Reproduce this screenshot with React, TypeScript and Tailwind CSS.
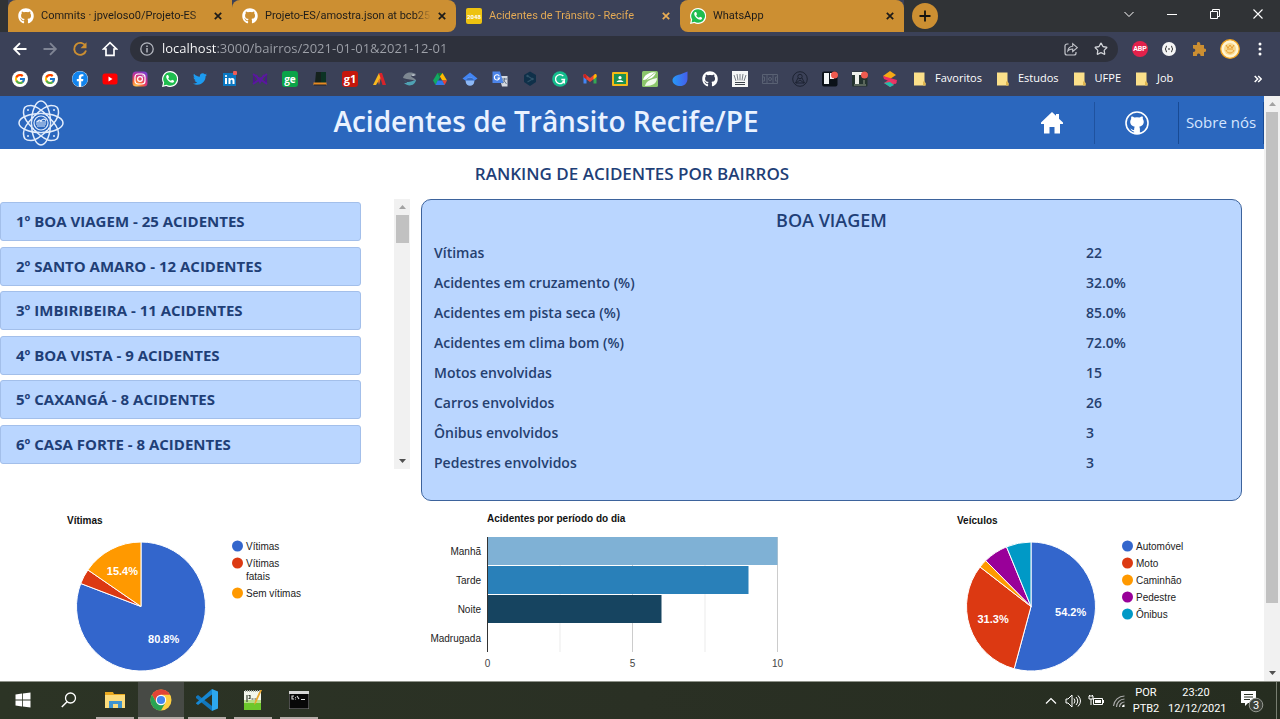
import type { ReactNode } from "react";
import { FcGoogle } from "react-icons/fc";
import { FaFacebook, FaGithub, FaTwitter } from "react-icons/fa";
import { Star } from "lucide-react";

type SvgProps = { className?: string; box?: string; children: ReactNode };

function Svg({ className = "size-4", box = "0 0 16 16", children }: SvgProps) {
  return (
    <svg viewBox={box} className={`shrink-0 ${className}`} fill="none" aria-hidden="true">
      {children}
    </svg>
  );
}

function WhatsAppIcon() {
  return (
    <Svg>
      <path d="M8 0a8 8 0 0 0-7 11.8L0 16l4.3-1A8 8 0 1 0 8 0Z" fill="#fff" />
      <path d="M8 1.2a6.8 6.8 0 0 0-5.8 10.3l-.6 2.9 2.9-.7A6.8 6.8 0 1 0 8 1.2Z" fill="#1fbd4f" />
      <path
        d="M5.4 4c-.4 0-1.2.6-1.2 1.8 0 2.5 3.5 6 6.1 6 1.200 0 1.900-.9 1.900-1.700 0-.4-1.800-1.300-2.100-1.300-.4 0-.7 1-1.100 1-.7 0-2.700-1.800-2.700-2.400 0-.3.700-.7.700-1.100C7 5.900 6.300 4 5.900 4Z"
        fill="#fff"
      />
    </Svg>
  );
}

const googleBadge = (
  <span className="flex size-4 items-center justify-center rounded-full bg-white">
    <FcGoogle className="size-3" />
  </span>
);

const bookmarkIcons: { name: string; icon: ReactNode }[] = [
  { name: "Google", icon: googleBadge },
  { name: "Google conta", icon: googleBadge },
  {
    name: "Facebook",
    icon: (
      <span className="flex size-4 rounded-full bg-white">
        <FaFacebook className="size-4 text-[#1184ee]" />
      </span>
    ),
  },
  {
    name: "YouTube",
    icon: (
      <Svg>
        <rect y="2.500" x=".5" width="15" height="11" rx="2.500" fill="#f00" />
        <path d="m6.500 5.600 4 2.400-4 2.400Z" fill="#fff" />
      </Svg>
    ),
  },
  {
    name: "Instagram",
    icon: (
      <Svg>
        <defs>
          <radialGradient id="ig" cx=".25" cy="1" r="1.100">
            <stop offset="0" stopColor="#ffd35a" />
            <stop offset=".35" stopColor="#fb6b35" />
            <stop offset=".65" stopColor="#d62e81" />
            <stop offset="1" stopColor="#7a3fd0" />
          </radialGradient>
        </defs>
        <rect x=".5" y=".5" width="15" height="15" rx="3.500" fill="url(#ig)" />
        <rect x="3" y="3" width="10" height="10" rx="3" stroke="#fff" strokeWidth="1.200" />
        <circle cx="8" cy="8" r="2.400" stroke="#fff" strokeWidth="1.200" />
        <circle cx="11" cy="5" r=".7" fill="#fff" />
      </Svg>
    ),
  },
  { name: "WhatsApp", icon: <WhatsAppIcon /> },
  { name: "Twitter", icon: <FaTwitter className="size-[14px] text-[#1d9bf0]" /> },
  {
    name: "LinkedIn",
    icon: (
      <Svg>
        <rect y="2" x="1" width="13" height="13" fill="#0a78c2" />
        <path d="M3 7h2v6H3ZM6.500 7h1.900v.9c1-1.500 4.100-1.300 4.100 1.500V13h-2V9.900c0-1.600-2-1.600-2 0V13h-2Z" fill="#fff" />
        <circle cx="4" cy="5" r="1.100" fill="#fff" />
        <rect x="11" width="4" height="4" rx="1" fill="#ee5d56" />
      </Svg>
    ),
  },
  {
    name: "M",
    icon: (
      <Svg>
        <path d="M1 3v10l2-1V8Zm14 0v10l-2-1V8Z" fill="#4c168c" />
        <path d="m1 3 7 5 7-5M1 13l7-5 7 5M4 4l4 7 4-7" stroke="#5a189f" strokeWidth="2" />
      </Svg>
    ),
  },
  {
    name: "Globo Esporte",
    icon: (
      <span className="flex size-4 items-center justify-center rounded-[3px] bg-[#0ba449] text-[10px] leading-none font-bold text-white">
        ge
      </span>
    ),
  },
  {
    name: "Chapéu",
    icon: (
      <Svg>
        <path d="M4 1h10v11H3Z" fill="#15221d" />
        <path d="M9 1h5v11H9Z" fill="#0c3324" />
        <path d="M1.500 11.500h13V14h-13Z" fill="#e68a23" />
        <path d="M2 14h12" stroke="#20222a" />
      </Svg>
    ),
  },
  {
    name: "g1",
    icon: (
      <span className="flex size-4 items-center justify-center rounded-[3px] bg-[#c4170c] text-[11px] leading-none font-bold text-white">
        g1
      </span>
    ),
  },
  {
    name: "Adobe",
    icon: (
      <Svg>
        <path d="m7 2-6 12h3l5-8Z" fill="#f8b81e" />
        <path d="m7 2 3 0 4 12h-3.500Z" fill="#d8232a" />
        <path d="m6 10 3-4-2 8Z" fill="#ee7624" />
      </Svg>
    ),
  },
  {
    name: "Ondas",
    icon: (
      <Svg>
        <path d="M1 7c2-7 9-6 13-4-3 0-5 1-5 2 1 2 5 2 5 5C10 8 6 9 1 7Z" fill="#7d8791" />
        <path d="M2 9c4 4 7 1 12 0-1 6-8 7-12 3 2 0 3 0 3-1Z" fill="#4fa2b4" />
        <path d="M9 4c2-1 4-1 5 0l-3 1Z" fill="#d3dbe0" />
      </Svg>
    ),
  },
  {
    name: "Google Drive",
    icon: (
      <Svg>
        <path d="M5.500 2h5L8 6.500Z" fill="#188038" />
        <path d="M5.500 2 8 6.500 3.600 14 1 9.600Z" fill="#11a861" />
        <path d="M10.500 2 15 9.600h-4.700L7.900 5.500Z" fill="#ffba00" />
        <path d="M5.700 9.600h4.600L13 14H3.500Z" fill="#3079ed" />
        <path d="M10.300 9.600H15L12.700 14Z" fill="#ea4335" />
      </Svg>
    ),
  },
  {
    name: "Acadêmico",
    icon: (
      <Svg>
        <path d="m8 1.500 7.500 6L12 10H4L.5 7.500Z" fill="#4285f4" />
        <circle cx="8" cy="10.500" r="4.300" fill="#8db8f6" />
        <path d="M3.800 9.500a4.500 4.500 0 0 1 8.400 0Z" fill="#356ac3" />
      </Svg>
    ),
  },
  {
    name: "Tradutor",
    icon: (
      <Svg>
        <path d="M7 5h8.500v10.500H10Z" fill="#d5d9e0" />
        <path d="M.5.500H8L11.500 12H.5Z" fill="#4c84e8" />
        <path d="M7.300 5.200A2.600 2.600 0 1 0 7.500 7H5.400" stroke="#fff" strokeWidth="1.100" />
        <path d="M10 8h5M12.500 7v1c0 2-1 4-2 4m1-3 3 4" stroke="#65768c" />
      </Svg>
    ),
  },
  {
    name: "DeepL",
    icon: (
      <Svg>
        <path d="m8 .5 6 3.500v7L8 15 2 11V4Z" fill="#0f3049" />
        <path d="m5.500 5 5 3-5 3" stroke="#2f5268" strokeWidth="1.200" />
        <circle cx="5.500" cy="5" r="1.200" fill="#2f5268" />
        <circle cx="10.500" cy="8" r="1.200" fill="#2f5268" />
      </Svg>
    ),
  },
  {
    name: "Grammarly",
    icon: (
      <Svg>
        <circle cx="8" cy="8" r="7.800" fill="#14bc8d" />
        <path d="M11.300 5A4.500 4.500 0 1 0 12.500 8.500H9.300m1 2h2v2" stroke="#fff" strokeWidth="1.400" />
      </Svg>
    ),
  },
  {
    name: "Gmail",
    icon: (
      <Svg>
        <path d="M1.500 3.500v9h3V7Z" fill="#4285f4" />
        <path d="M14.500 3.500v9h-3V7Z" fill="#34a853" />
        <path d="m1.500 3.500 1.500-.5 5 4 5-4 1.500.5V6L8 11 1.500 6Z" fill="#ea4335" />
        <path d="m11.500 5 1.500-2c1 0 1.500.5 1.500 1.500V6l-3 2.400Z" fill="#fbbc04" />
        <path d="M1.500 4.500C1.500 3.500 2 3 3 3l1.500 1.500v3.900l-3-2.400Z" fill="#c5221f" />
      </Svg>
    ),
  },
  {
    name: "Sala de aula",
    icon: (
      <Svg>
        <rect y="1" width="16" height="14" rx="1" fill="#f5ba16" />
        <rect x="2" y="3" width="12" height="10" fill="#1b9153" />
        <circle cx="8" cy="6.700" r="1.600" fill="#fff" />
        <path d="M4.500 11c1-2.500 6-2.500 7 0Z" fill="#fff" />
      </Svg>
    ),
  },
  {
    name: "Planta",
    icon: (
      <Svg>
        <rect width="16" height="16" rx="1.500" fill="#8bc56b" />
        <path d="M1 9C2 4 7 1 14 1 13 6 8 9 1 9Z" fill="#fff" />
        <path d="M3 15C4 10 9 8 15 7c0 5-4 8-12 8Z" fill="#eff8e9" />
        <path d="M0 12 15 0" stroke="#8bc56b" strokeWidth=".8" />
      </Svg>
    ),
  },
  {
    name: "Gota",
    icon: (
      <Svg>
        <defs>
          <linearGradient id="drop" x1="0" x2="1">
            <stop stopColor="#2699f7" />
            <stop offset="1" stopColor="#455eeb" />
          </linearGradient>
        </defs>
        <path d="M15.500.5v7c0 5-3.500 7.500-7 7.500-4 0-8-2-8-5.500C.5 6 4 4 8 3.500Z" fill="url(#drop)" />
      </Svg>
    ),
  },
  { name: "GitHub", icon: <FaGithub className="size-4 text-white" /> },
  {
    name: "Universidade",
    icon: (
      <Svg>
        <path d="M0 0h16v16H0Z" fill="#f5f6f7" />
        <path d="M3 11.500h10M3 13.500h10" stroke="#3c434b" />
        <path d="M4 10 2 4m4 5.500L5 3m3 6.500V3m2 6.500L11 3m1 7 2-6" stroke="#59616a" strokeWidth=".8" />
      </Svg>
    ),
  },
  {
    name: "Campo",
    icon: (
      <Svg>
        <path d="M.5 3.500h15v9H.5ZM5 3.500v9m6-9v9M.5 6h2v4h-2m15-4h-2v4h2" stroke="#596173" />
        <circle cx="8" cy="8" r="1.500" stroke="#596173" />
      </Svg>
    ),
  },
  {
    name: "Perfil",
    icon: (
      <Svg>
        <circle cx="8" cy="8" r="7.300" stroke="#1d2332" />
        <circle cx="8" cy="5.500" r="2.200" stroke="#1d2332" />
        <path d="m6 7-2.500 5h9L10 7m-6 5 4-3 4 3" stroke="#1d2332" />
      </Svg>
    ),
  },
  {
    name: "Quadro",
    icon: (
      <Svg>
        <rect y=".5" width="15.500" height="15" rx="2" fill="#0b1118" />
        <path d="M2 2h5v11H2Zm6 0h4v6H8Z" fill="#f3f5f6" />
        <circle cx="12.500" cy="4" r="3.500" fill="#f05b50" />
      </Svg>
    ),
  },
  {
    name: "Quadro 2",
    icon: (
      <Svg>
        <rect y=".5" width="15.500" height="15" rx="1" fill="#24332f" />
        <path d="M0 1h11v3H7v9H3V4H0Z" fill="#eef0ec" />
        <path d="M2 14h12M12 9v4" stroke="#8f9a88" />
        <circle cx="12.500" cy="4" r="3.500" fill="#f05b50" />
      </Svg>
    ),
  },
  {
    name: "Camadas",
    icon: (
      <Svg>
        <path d="m1 5 7-5 6 4-6 4Z" fill="#f5a915" />
        <path d="m1 5 14 4-1 4L2 8Z" fill="#ef2c62" />
        <path d="m2 12 6-4 7 3-7 5Z" fill="#e83765" />
        <path d="m2 12 6-1 4 3-4 2Z" fill="#20bda9" />
      </Svg>
    ),
  },
];

const folders = ["Favoritos", "Estudos", "UFPE", "Job"];

const tabs = [
  { title: "Commits · jpveloso0/Projeto-ES", icon: <FaGithub className="size-4 shrink-0 text-white" />, shape: "rounded-tl-lg" },
  { title: "Projeto-ES/amostra.json at bcb25", icon: <FaGithub className="size-4 shrink-0 text-white" />, shape: "rounded-r-lg rounded-tl-lg" },
  {
    title: "Acidentes de Trânsito - Recife",
    icon: (
      <span className="flex size-4 shrink-0 items-center justify-center rounded-[2px] bg-[#edc211] text-[6px] font-bold text-white">
        2048
      </span>
    ),
    shape: "",
    active: true,
  },
  { title: "WhatsApp", icon: <WhatsAppIcon />, shape: "rounded-l-lg rounded-tr-lg" },
];

function CloseGlyph() {
  return (
    <Svg className="size-2" box="0 0 8 8">
      <path d="m.8.8 6.400 6.400m0-6.400L.8 7.200" stroke="currentColor" strokeWidth="1.700" />
    </Svg>
  );
}

function TabStrip() {
  return (
    <div className="flex h-8 bg-[#303336] pl-2">
      <div className="flex min-w-0 bg-[#3b4158]">
        {tabs.map((tab) => (
          <div
            key={tab.title}
            className={`flex w-56 min-w-0 items-center gap-[7px] px-[10px] font-['Roboto',sans-serif] text-[11px] ${tab.shape} ${
              tab.active ? "bg-[#3b4158] text-[#e9ad55]" : "bg-[#cc8f32] text-[#1d1b19]"
            }`}
          >
            {tab.icon}
            <span className="min-w-0 flex-1 bg-[linear-gradient(to_left,transparent,currentColor_16px)] bg-clip-text whitespace-nowrap [-webkit-text-fill-color:transparent]">
              {tab.title}
            </span>
            <button aria-label={`Fechar ${tab.title}`} className="shrink-0">
              <CloseGlyph />
            </button>
          </div>
        ))}
      </div>
      <div className="flex flex-1 items-center justify-between pl-2">
        <button aria-label="Nova guia" className="flex size-[26px] items-center justify-center rounded-full bg-[#cc8f32]">
          <Svg className="size-3" box="0 0 12 12">
            <path d="M6 .5v11M.5 6h11" stroke="#15130f" strokeWidth="1.800" />
          </Svg>
        </button>
        <div className="flex items-center gap-[33px] pr-[17px] pb-1 text-white">
          <button aria-label="Pesquisar guias">
            <Svg className="size-[10px]" box="0 0 10 10">
              <path d="m.5 3 4.500 4.500L9.500 3" stroke="currentColor" />
            </Svg>
          </button>
          <button aria-label="Minimizar">
            <Svg className="size-[10px]" box="0 0 10 10">
              <path d="M0 5.500h10" stroke="currentColor" />
            </Svg>
          </button>
          <button aria-label="Restaurar">
            <Svg className="size-[10px]" box="0 0 10 10">
              <path d="M.5 2.500h7v7h-7Zm2 0v-2h7v7h-2" stroke="currentColor" />
            </Svg>
          </button>
          <button aria-label="Fechar janela">
            <Svg className="size-[10px]" box="0 0 10 10">
              <path d="m.5.5 9 9m0-9-9 9" stroke="currentColor" strokeWidth="1.100" />
            </Svg>
          </button>
        </div>
      </div>
    </div>
  );
}

function AddressRow() {
  return (
    <div className="flex h-[34px] items-center bg-[#3b4158] pr-[18px] pl-3">
      <div className="flex items-center gap-[14px] text-white">
        <button aria-label="Voltar">
          <Svg>
            <path d="M14.500 8H2.500M8 2.200 2.200 8 8 13.800" stroke="currentColor" strokeWidth="1.900" />
          </Svg>
        </button>
        <button aria-label="Avançar" className="text-[#7f8494]">
          <Svg>
            <path d="M1.500 8h12M8 2.200 13.800 8 8 13.800" stroke="currentColor" strokeWidth="1.900" />
          </Svg>
        </button>
        <button aria-label="Recarregar" className="text-[#cc8f32]">
          <Svg>
            <path d="M13.500 5A6 6 0 1 0 14 9.500" stroke="currentColor" strokeWidth="1.900" />
            <path d="M14.500 1.200v6h-6Z" fill="currentColor" />
          </Svg>
        </button>
        <button aria-label="Página inicial">
          <Svg>
            <path d="M1.500 8 8 1.700 14.500 8H12v6.300H4V8Z" stroke="currentColor" strokeWidth="1.700" />
          </Svg>
        </button>
      </div>
      <div className="ml-3 flex h-[26px] flex-1 items-center rounded-full bg-[#2e313c] pr-[10px] pl-[10px]">
        <Svg className="size-[14px]" box="0 0 14 14">
          <circle cx="7" cy="7" r="6.200" stroke="#b4b7bf" strokeWidth="1.300" />
          <path d="M7 6v4.500M7 3.400v1.500" stroke="#b4b7bf" strokeWidth="1.500" />
        </Svg>
        <input
          aria-label="Endereço"
          defaultValue="localhost:3000/bairros/2021-01-01&2021-12-01"
          className="ml-2 min-w-0 flex-1 bg-[linear-gradient(to_right,#ffffff_54px,#9fa2aa_54px)] bg-clip-text text-[13px] text-transparent outline-none"
        />
        <button aria-label="Compartilhar" className="mr-4">
          <Svg className="size-[14px]" box="0 0 14 14">
            <path d="M4.500 2H3a2 2 0 0 0-2 2v7a2 2 0 0 0 2 2h7a2 2 0 0 0 2-2v-1" stroke="#c3c5cb" strokeWidth="1.200" />
            <path d="M3.800 9c.4-3 2-4.500 4.900-4.700V1.700l4.600 4-4.600 3.800V7C6.500 6.900 5 7.600 3.800 9Z" stroke="#c3c5cb" strokeWidth="1.100" />
          </Svg>
        </button>
        <button aria-label="Favoritar">
          <Star className="size-[14px] text-[#d1d3d8]" strokeWidth={2.200} />
        </button>
      </div>
      <div className="ml-[14px] flex items-center">
        <button aria-label="Adblock" className="flex size-4 items-center justify-center rounded-full bg-[#e3214b] font-['Roboto',sans-serif] text-[7px] font-bold text-white">
          ABP
        </button>
        <button aria-label="JSON" className="ml-[14px]">
          <Svg className="size-[14px]" box="0 0 14 14">
            <circle cx="7" cy="7" r="7" fill="#f5f5f5" />
            <path d="M5 4C3.500 4 4.700 6.500 3 7c1.700.500.500 3 2 3m4-6c1.500 0 .3 2.500 2 3-1.700.500-.5 3-2 3M6 7h2" stroke="#222" />
          </Svg>
        </button>
        <button aria-label="Extensões" className="ml-4">
          <Svg className="size-[14px]" box="0 0 14 14">
            <path
              d="M1 3h4c-1-4 4-4 3.300 0H12v3.500c3-.5 3 4 0 3.500V14H8.500c.3-3.300-4-3.300-3.500 0H1v-4c3 .3 3-3.800 0-3.500Z"
              fill="#cc8f32"
            />
          </Svg>
        </button>
        <button aria-label="Conta" className="ml-[14px]">
          <Svg className="size-5" box="0 0 20 20">
            <circle cx="10" cy="10" r="9.300" fill="#fff4d0" stroke="#f0a31d" strokeWidth="1.300" />
            <circle cx="10" cy="10" r="6" fill="#f8d88d" />
            <path d="m6 6 2 3 2-3 2 3 2-3M6 11c1 4 7 4 8 0M7 10h6" stroke="#e69a2c" />
          </Svg>
        </button>
        <button aria-label="Menu" className="ml-[18px]">
          <Svg className="h-[14px] w-1" box="0 0 4 14">
            <circle cx="2" cy="2" r="1.500" fill="#fff" />
            <circle cx="2" cy="7" r="1.500" fill="#fff" />
            <circle cx="2" cy="12" r="1.500" fill="#fff" />
          </Svg>
        </button>
      </div>
    </div>
  );
}

function Bookmarks() {
  return (
    <div className="flex h-[30px] items-center bg-[#3b4158] pb-[5px] pl-3 text-[11px] text-white">
      <div className="flex items-center gap-[14px]">
        {bookmarkIcons.map((item) => (
          <a key={item.name} href="#" aria-label={item.name} className="flex size-4 items-center justify-center">
            {item.icon}
          </a>
        ))}
      </div>
      <div className="ml-4 flex flex-1 gap-[15px]">
        {folders.map((folder) => (
          <button key={folder} className="flex items-center gap-[9px]">
            <Svg className="h-[14px] w-3" box="0 0 12 14">
              <path d="M0 .5h10.500V10l1 1v2.500H0Z" fill="#fbe08a" />
              <path d="M10.500 8.500 9 10v3.500h2.500V11l-1-1Z" fill="#dfb54e" />
            </Svg>
            {folder}
          </button>
        ))}
      </div>
      <button aria-label="Mais favoritos" className="mr-[18px]">
        <Svg className="size-2" box="0 0 8 8">
          <path d="m.7 1 3 3-3 3m3.500-6 3 3-3 3" stroke="currentColor" strokeWidth="1.500" />
        </Svg>
      </button>
    </div>
  );
}

function AtomLogo() {
  return (
    <svg viewBox="-23 -23 46 46" className="size-[46px]" fill="none" stroke="#e3edfc" role="img" aria-label="Logo">
      <g strokeWidth="1.500">
        <ellipse rx="22" ry="9.500" />
        <ellipse rx="9.500" ry="22" />
        <path d="M-17.500-10c0-6 2-7.500 7.500-7.500 8 0 27.500 19 27.500 27.500 0 6-2 7.500-7.500 7.500-8 0-27.500-19-27.500-27.500Z" />
        <path d="M17.500-10c0-6-2-7.500-7.500-7.500-8 0-27.500 19-27.500 27.500 0 6 2 7.500 7.500 7.500 8 0 27.500-19 27.500-27.500Z" />
      </g>
      <circle r="9.500" fill="#2b67be" strokeWidth="1" />
      <circle r="7" strokeWidth="1.200" />
      <path d="M-5 1h10M-4 3h8M-4-1c2-3 4-2 4 0 0-3 4-4 5-1M-5-1h10" strokeWidth="1.100" />
      <g fill="#e3edfc" stroke="none">
        <circle cx="-13" cy="-13" r="1" />
        <circle cx="13" cy="-13" r="1" />
        <circle cx="-13" cy="13" r="1" />
        <circle cx="13" cy="13" r="1" />
      </g>
    </svg>
  );
}

function Header() {
  return (
    <header className="flex h-[53px] items-center bg-[#2b67be] text-[#eaf2ff]">
      <a href="#" className="flex w-[82px] justify-center">
        <AtomLogo />
      </a>
      <h1 className="flex-1 pb-1 text-center text-[28px] leading-none font-semibold">Acidentes de Trânsito Recife/PE</h1>
      <nav className="flex h-[42px]">
        <a href="#" aria-label="Início" className="flex w-[85px] items-center justify-center border-r border-[#1f529f]">
          <Svg className="size-[22px]" box="0 0 22 22">
            <path d="M11 0 0 10.500V12h3v9.500h5.500V15h5v6.500H19V12h3v-1.500L18 6.700V2h-3v1.800Z" fill="#fff" />
          </Svg>
        </a>
        <a href="#" aria-label="GitHub" className="flex w-[84px] items-center justify-center border-r border-[#184a94]">
          <Svg className="size-6" box="0 0 24 24">
            <circle cx="12" cy="12" r="11" stroke="#fff" strokeWidth="1.600" />
            <path
              d="M6.400 5.500c1.300 0 2.300.5 3.100 1.100a10 10 0 0 1 5 0c.8-.6 1.800-1.100 3.100-1.100.4.900.4 1.800.2 2.600 2 2.700 1 7-3.600 7.600.5.600.7 1.300.7 2.200V23H9.100v-2.600c-2.600.3-2.500-2.200-4-2.600 1.800-.7 2.400 1.700 4 1.200 0-1.400.200-2.600.7-3.300C5.200 15.100 4.200 10.800 6.200 8.100 6 7.300 6 6.400 6.400 5.500Z"
              fill="#fff"
            />
          </Svg>
        </a>
        <a href="#" className="flex w-[85px] items-center justify-center border-r border-[#184a94] text-[15px] text-[#d5e5ff]">
          Sobre nós
        </a>
      </nav>
    </header>
  );
}

const ranking = [
  "1º BOA VIAGEM - 25 ACIDENTES",
  "2º SANTO AMARO - 12 ACIDENTES",
  "3º IMBIRIBEIRA - 11 ACIDENTES",
  "4º BOA VISTA - 9 ACIDENTES",
  "5º CAXANGÁ - 8 ACIDENTES",
  "6º CASA FORTE - 8 ACIDENTES",
];

const stats = [
  ["Vítimas", "22"],
  ["Acidentes em cruzamento (%)", "32.0%"],
  ["Acidentes em pista seca (%)", "85.0%"],
  ["Acidentes em clima bom (%)", "72.0%"],
  ["Motos envolvidas", "15"],
  ["Carros envolvidos", "26"],
  ["Ônibus envolvidos", "3"],
  ["Pedestres envolvidos", "3"],
];

function ArrowUp() {
  return (
    <Svg className="h-1 w-[7px]" box="0 0 7 4">
      <path d="M0 4 3.500 0 7 4Z" fill="#a3a3a3" />
    </Svg>
  );
}

function ArrowDown() {
  return (
    <Svg className="h-1 w-[7px]" box="0 0 7 4">
      <path d="M0 0h7L3.500 4Z" fill="#505050" />
    </Svg>
  );
}

function Scrollbar({ size, thumb }: { size: string; thumb: string }) {
  return (
    <div aria-hidden="true" className={`flex shrink-0 flex-col items-center bg-[#f1f1f1] ${size}`}>
      <span className="flex h-4 items-center">
        <ArrowUp />
      </span>
      <span className={`bg-[#c1c1c1] ${thumb}`} />
      <span className="mt-auto flex h-4 items-center">
        <ArrowDown />
      </span>
    </div>
  );
}

function Ranking() {
  return (
    <div className="flex h-[270px] w-[410px] shrink-0 justify-between">
      <ul className="flex w-[361px] flex-col justify-between pt-[3px] pb-[5px]">
        {ranking.map((entry) => (
          <li key={entry} className="flex h-[39px]">
            <button className="flex-1 rounded-[3px] border border-[#a3bfea] bg-[#bad6ff] px-[15px] text-left text-[15px] leading-none font-bold text-[#1f3f77]">
              {entry}
            </button>
          </li>
        ))}
      </ul>
      <Scrollbar size="w-4" thumb="h-7 w-[13px]" />
    </div>
  );
}

function DetailCard() {
  return (
    <section className="mr-[22px] ml-[11px] h-[302px] flex-1 rounded-[10px] border border-[#3d639c] bg-[#bad6ff] px-3 text-[#25406f]">
      <h3 className="pt-[7px] pb-1 text-center text-lg leading-[27px] font-semibold text-[#1f3f77]">BOA VIAGEM</h3>
      <table className="w-full table-fixed text-left text-sm leading-none font-semibold">
        <tbody>
          {stats.map(([label, value]) => (
            <tr key={label} className="h-[30px]">
              <th scope="row" className="w-[82%] p-0 font-semibold">
                {label}
              </th>
              <td className="p-0">{value}</td>
            </tr>
          ))}
        </tbody>
      </table>
    </section>
  );
}

type Slice = { value: number; color: string; lines: string[]; label?: string };

function PieChart({ title, slices }: { title: string; slices: Slice[] }) {
  const total = slices.reduce((sum, slice) => sum + slice.value, 0);
  const cx = 141;
  const cy = 105.5;
  const r = 64.5;
  let start = 0;
  let line = 0;
  return (
    <svg viewBox="0 0 374 180" className="h-[180px] w-[374px] shrink-0 font-['Liberation_Sans',Arial,sans-serif] text-[10px]" role="img" aria-label={title}>
      <text x="67" y="23" className="font-bold" fill="#111">
        {title}
      </text>
      {slices.map((slice) => {
        const a0 = (start / total) * Math.PI * 2;
        start += slice.value;
        const a1 = (start / total) * Math.PI * 2;
        const mid = (a0 + a1) / 2;
        const d = `M${cx} ${cy}L${cx + r * Math.sin(a0)} ${cy - r * Math.cos(a0)}A${r} ${r} 0 ${a1 - a0 > Math.PI ? 1 : 0} 1 ${cx + r * Math.sin(a1)} ${cy - r * Math.cos(a1)}Z`;
        return (
          <g key={slice.color}>
            <path d={d} fill={slice.color} stroke="#fff" />
            {slice.label && (
              <text x={cx + r * 0.62 * Math.sin(mid)} y={cy - r * 0.62 * Math.cos(mid) + 4} textAnchor="middle" className="text-[11px] font-bold" fill="#fff">
                {slice.label}
              </text>
            )}
          </g>
        );
      })}
      {slices.map((slice) => {
        const y = 45 + line;
        line += 17 + (slice.lines.length - 1) * 13;
        return (
          <g key={slice.color}>
            <circle cx="237.500" cy={y} r="5.500" fill={slice.color} />
            {slice.lines.map((text, i) => (
              <text key={text} x="246" y={y + 4 + i * 13} fill="#222">
                {text}
              </text>
            ))}
          </g>
        );
      })}
    </svg>
  );
}

const periods = [
  { name: "Manhã", value: 10, color: "#7fb1d5" },
  { name: "Tarde", value: 9, color: "#2980b9" },
  { name: "Noite", value: 6, color: "#164460" },
  { name: "Madrugada", value: 0, color: "#0b2233" },
];

function BarChart() {
  const left = 65.5;
  const unit = 29;
  return (
    <svg viewBox="0 0 420 180" className="h-[180px] w-[420px] shrink-0 font-['Liberation_Sans',Arial,sans-serif] text-[10px]" role="img" aria-label="Acidentes por período do dia">
      <text x="65" y="21" className="font-bold" fill="#111">
        Acidentes por período do dia
      </text>
      {[2.5, 5, 7.5, 10].map((tick) => (
        <path key={tick} d={`M${left + tick * unit} 36V151`} stroke={tick % 5 ? "#ebebeb" : "#ccc"} />
      ))}
      {periods.map((period, i) => (
        <g key={period.name}>
          <rect x={left} y={36 + i * 29} width={period.value * unit} height="28" fill={period.color} />
          <text x="59" y={54 + i * 29} textAnchor="end" fill="#222">
            {period.name}
          </text>
        </g>
      ))}
      <path d={`M${left} 36V151`} stroke="#333" />
      {[0, 5, 10].map((tick) => (
        <text key={tick} x={left + tick * unit} y="166" textAnchor="middle" fill="#444">
          {tick}
        </text>
      ))}
    </svg>
  );
}

const victims: Slice[] = [
  { value: 80.8, color: "#3366cc", lines: ["Vítimas"], label: "80.8%" },
  { value: 3.8, color: "#dc3912", lines: ["Vítimas", "fatais"] },
  { value: 15.4, color: "#ff9900", lines: ["Sem vítimas"], label: "15.4%" },
];

const vehicles: Slice[] = [
  { value: 54.2, color: "#3366cc", lines: ["Automóvel"], label: "54.2%" },
  { value: 31.3, color: "#dc3912", lines: ["Moto"], label: "31.3%" },
  { value: 2.1, color: "#ff9900", lines: ["Caminhão"] },
  { value: 6.2, color: "#990099", lines: ["Pedestre"] },
  { value: 6.2, color: "#0099c6", lines: ["Ônibus"] },
];

const taskApps: { name: string; icon: ReactNode; state: string }[] = [
  {
    name: "Iniciar",
    state: "none",
    icon: (
      <Svg>
        <path d="M.5 2.600 7 1.600v6H.5Zm7.300-1.100L15.500.500v7.100H7.800ZM.5 8.400H7v6l-6.500-1Zm7.300 0h7.700v7.100l-7.700-1Z" fill="#fff" />
      </Svg>
    ),
  },
  {
    name: "Pesquisar",
    state: "none",
    icon: (
      <Svg>
        <circle cx="9.500" cy="6" r="5" stroke="#fff" strokeWidth="1.300" />
        <path d="M6 9.800.8 15" stroke="#fff" strokeWidth="1.500" />
      </Svg>
    ),
  },
  {
    name: "Explorador de Arquivos",
    state: "open",
    icon: (
      <Svg className="size-5" box="0 0 20 20">
        <path d="M0 2h8l1 2h11v14H0Z" fill="#e9a91f" />
        <path d="M0 5h20v13H0Z" fill="#fbdc7c" />
        <path d="M4 18v-7h13v7h-4v-4H8v4Z" fill="#3e94cf" />
      </Svg>
    ),
  },
  {
    name: "Chrome",
    state: "active",
    icon: (
      <Svg className="size-[22px]" box="0 0 22 22">
        <circle cx="11" cy="11" r="10.500" fill="#fdcf41" />
        <path d="M1.900 5.750A10.500 10.500 0 0 1 20.100 5.750H11L6.450 13.600Z" fill="#e24436" />
        <path d="M1.900 5.750A10.500 10.500 0 0 0 11 21.500L15.550 13.600H6.450Z" fill="#28a353" />
        <circle cx="11" cy="11" r="5.200" fill="#fff" />
        <circle cx="11" cy="11" r="4.100" fill="#4486ee" />
      </Svg>
    ),
  },
  {
    name: "Visual Studio Code",
    state: "open",
    icon: (
      <Svg className="size-[22px]" box="0 0 22 22">
        <path d="m0 7.500 2-1.500L16 17v5L0 9Z" fill="#1277bd" />
        <path d="M0 14 16 0v5.500L2 16 0 14.500Z" fill="#1688d4" />
        <path d="m16 0 6 2.500v17L16 22Z" fill="#2da8ee" />
      </Svg>
    ),
  },
  {
    name: "Notepad++",
    state: "open",
    icon: (
      <Svg className="size-[22px]" box="0 0 22 22">
        <path d="M2 2h17v19H2Z" fill="#f4f7ed" />
        <path d="M2 13h17v8H2Z" fill="#6cc72b" />
        <path d="M2 11h17v3H2Z" fill="#b5df87" />
        <path d="M5 6v7m1.500-6.500h1.500v3H6.500m3 .500h2m1 0h2" stroke="#3d4638" strokeWidth="1.200" />
        <path d="m20 1-6 13-2 2 1-4 5-11Z" fill="#e9a62d" />
        <path d="M3 2h15" stroke="#a9ada4" strokeDasharray="1 1" strokeWidth="2" />
      </Svg>
    ),
  },
  {
    name: "Prompt de Comando",
    state: "open",
    icon: (
      <Svg className="h-[18px] w-5" box="0 0 20 18">
        <path d="M0 0h20v18H0Z" fill="#080808" stroke="#8e8e8e" />
        <path d="M0 0h20v3H0Z" fill="#d7d7d7" />
        <path d="M5 5H3v3h2m1.500-2v.8m0 1v.8M8 5l2 3m2 .5h4" stroke="#ddd" strokeWidth="1.100" />
      </Svg>
    ),
  },
];

const appStyle: Record<string, string> = {
  none: "border-transparent",
  open: "mx-1 border-[#b4aca8]",
  active: "bg-[#474a45] border-[#b4aca8]",
};

function Taskbar() {
  return (
    <footer className="flex h-[38px] justify-between border-t border-[#8f938a] bg-[linear-gradient(to_right,#2c3425,#2a3024_50%,#262d20)] font-['Roboto',sans-serif] text-[11px] leading-4 text-white">
      <div className="flex">
        {taskApps.map((app) => (
          <div key={app.name} className="flex w-[46px]">
            <button aria-label={app.name} className={`flex flex-1 items-center justify-center border-b-2 ${appStyle[app.state]}`}>
              {app.icon}
            </button>
          </div>
        ))}
      </div>
      <div className="flex items-center">
        <Svg className="h-[7px] w-3" box="0 0 12 7">
          <path d="m1 6.500 5-5 5 5" stroke="#fff" strokeWidth="1.200" />
        </Svg>
        <Svg className="ml-2 size-4">
          <path d="M1 6h2l4-4v12l-4-4H1Z" stroke="#fff" />
          <path d="M9 5.500q2 2.500 0 5M11 4q3.500 4 0 8M13 2.500q5 5.500 0 11" stroke="#fff" />
        </Svg>
        <Svg className="ml-[7px] size-4">
          <path d="M5.500 5.500h9v6h-9Z" stroke="#fff" />
          <path d="M7 7h6v3H7Zm8 0h1v3h-1Z" fill="#fff" />
          <path d="M1 3h4v3H1Zm.5-1v1m3-1v1M3 6v6" stroke="#fff" />
        </Svg>
        <Svg className="ml-2 size-4">
          <g stroke="#aaa" strokeWidth="1.200">
            <path d="M1.500 13A11 11 0 0 1 12.500 3M4.500 14a8 8 0 0 1 8-8M7.500 14a5 5 0 0 1 5-5" />
          </g>
          <path d="M10 14a2.500 2.500 0 0 1 2.500-2.500V14Z" fill="#fff" />
        </Svg>
        <button className="ml-1 w-7 text-center">
          POR
          <br />
          PTB2
        </button>
        <button className="ml-2 w-14 text-center whitespace-nowrap">
          23:20
          <br />
          12/12/2021
        </button>
        <button aria-label="Notificações" className="ml-4 flex">
          <Svg className="size-6" box="0 0 24 24">
            <path d="M1 2h15v12H8l-3 3v-3H1Z" fill="#fff" />
            <path d="M4 5.500h9M4 8h9M4 10.500h6" stroke="#2b3226" />
            <circle cx="16" cy="16" r="6.800" fill="#3d423a" stroke="#969a92" />
            <text x="16" y="20" textAnchor="middle" fill="#fff" className="text-[11px]">
              3
            </text>
          </Svg>
        </button>
        <span className="ml-2 h-full border-r border-[#777d70] pl-1" />
        <span className="w-[3px]" />
      </div>
    </footer>
  );
}

export default function App() {
  return (
    <div className="flex min-h-screen flex-col bg-white font-['Open_Sans','Noto_Sans',sans-serif]">
      <TabStrip />
      <AddressRow />
      <Bookmarks />
      <div className="flex flex-1">
        <main className="min-w-0 flex-1">
          <Header />
          <h2 className="py-3 text-center text-[17px] leading-[26px] font-semibold text-[#1f3f77]">RANKING DE ACIDENTES POR BAIRROS</h2>
          <div className="flex">
            <Ranking />
            <DetailCard />
          </div>
          <div className="flex justify-between">
            <PieChart title="Vítimas" slices={victims} />
            <BarChart />
            <PieChart title="Veículos" slices={vehicles} />
          </div>
        </main>
        <Scrollbar size="w-4" thumb="h-[491px] w-3" />
      </div>
      <Taskbar />
    </div>
  );
}
